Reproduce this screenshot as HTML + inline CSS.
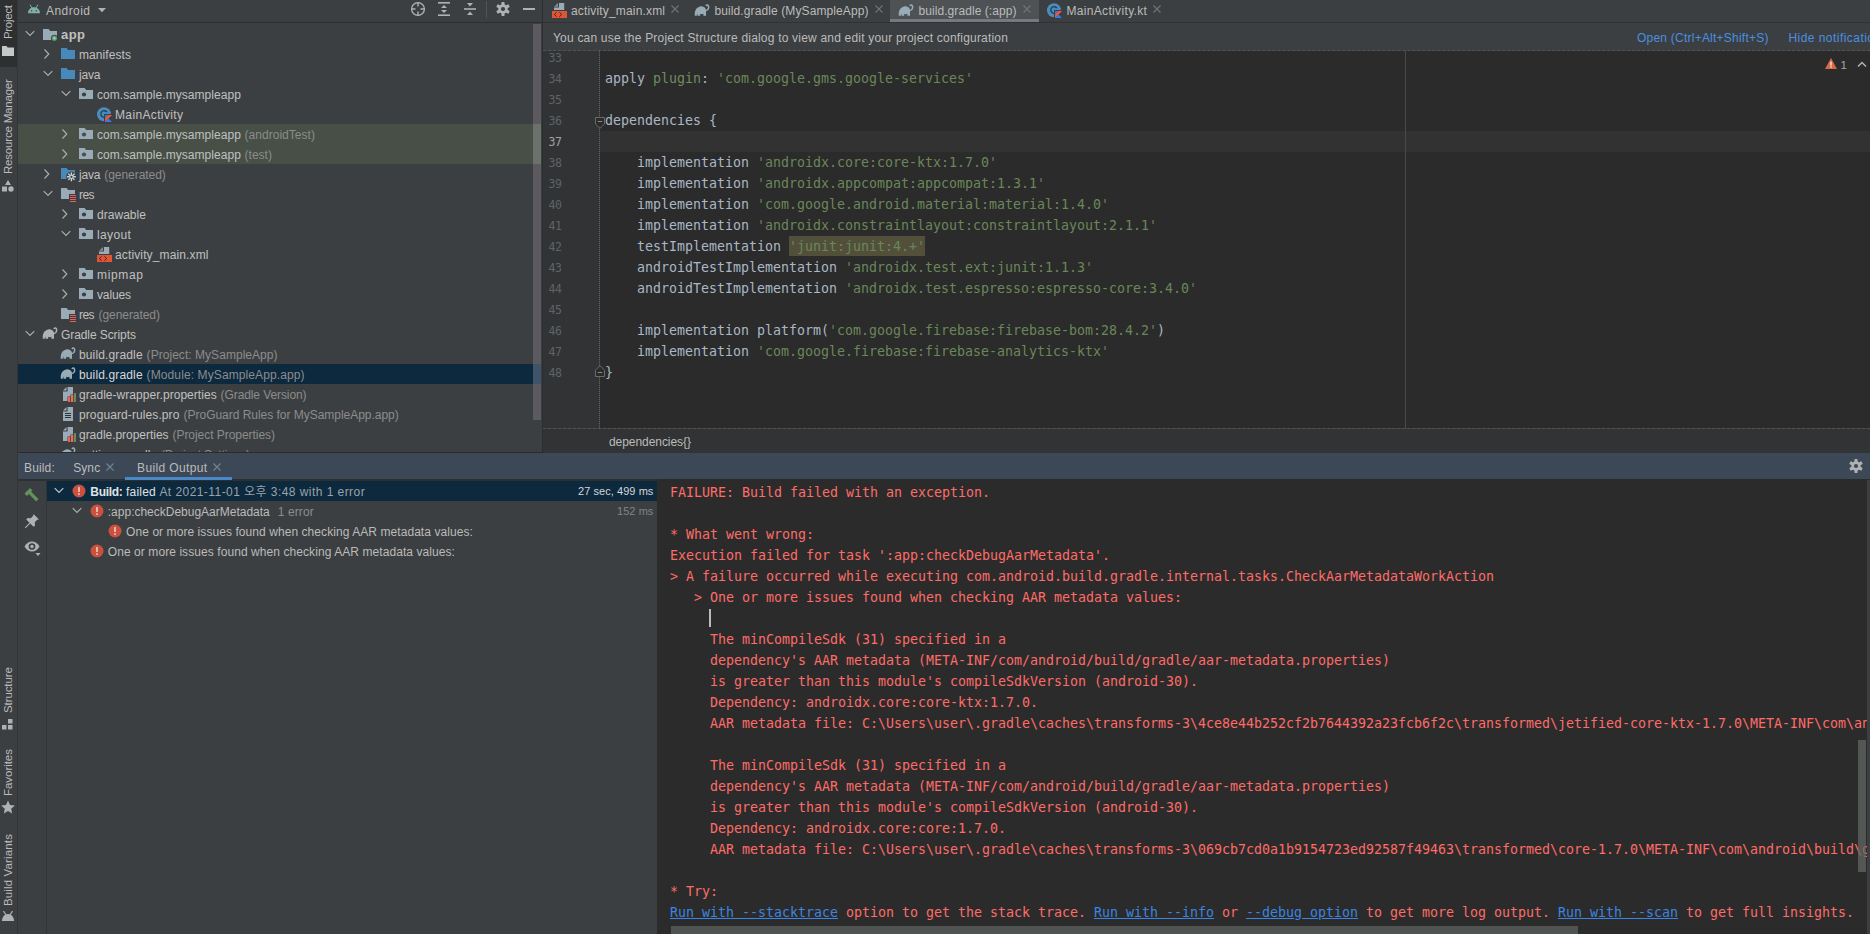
<!DOCTYPE html><html lang="ko"><head><meta charset="utf-8"><title>MySampleApp - build.gradle (:app)</title><style>

html,body{margin:0;padding:0;overflow:hidden}
body{width:1870px;height:934px;overflow:hidden;position:relative;background:#3c3f41;font-family:"Liberation Sans", "Noto Sans CJK KR", sans-serif;font-size:12px;color:#bbbbbb}
body>div,body>svg,body>span,body>pre,#con>pre{position:absolute;display:block}
span.t{white-space:pre;line-height:20px;height:20px}
span.m{font-family:"DejaVu Sans Mono", "Liberation Mono", monospace}
span.v{transform-origin:0 0;transform:rotate(-90deg)}
pre{margin:0;font-family:"DejaVu Sans Mono", "Liberation Mono", monospace;font-size:13.295px;line-height:21px;height:21px;white-space:pre;letter-spacing:.004px}
pre.code{color:#a9b7c6}
.cd{color:#a9b7c6}.ck{color:#6f8c5f}.cs{color:#6a8759}.cw{color:#6a8759;background:#52503a;display:inline-block;height:20px;vertical-align:top;margin-top:0}
#con{left:657px;top:480px;width:1210px;height:454px;overflow:hidden;position:absolute;z-index:2}
pre.con{left:13px;color:#ff6b68}
pre.con a{color:#3b84e0;text-decoration:underline}

</style></head><body>
<div style="left:0px;top:0px;width:17px;height:934px;background:#3c3f41;"></div>
<div style="left:0px;top:0px;width:17px;height:67px;background:#2d2f31;"></div>
<div style="left:17px;top:0px;width:1px;height:934px;background:#333638;"></div>
<svg style="left:2px;top:45px" width="12" height="11" viewBox="0 0 12 11"><path d="M0 1h4.500l1.200 1.600H12V11H0z" fill="#c4c8c9"/></svg>
<svg style="left:2px;top:180px" width="12" height="12" viewBox="0 0 12 12"><path d="M6 0l3 5H3z" fill="#afb1b3"/><rect x="0" y="6.500" width="5" height="5" fill="#afb1b3"/><circle cx="9" cy="9" r="2.700" fill="#afb1b3"/></svg>
<svg style="left:2px;top:719px" width="12" height="11" viewBox="0 0 12 11"><rect x="6" y="0" width="4.500" height="4.500" fill="#afb1b3"/><rect x="0" y="6" width="4.500" height="4.500" fill="#afb1b3"/><rect x="6" y="6" width="4.500" height="4.500" fill="#afb1b3"/></svg>
<svg style="left:1px;top:800px" width="14" height="14" viewBox="0 0 14 14"><path d="M7 .5l2 4.500 4.800.500-3.600 3.200 1 4.800L7 11l-4.200 2.500 1-4.800L.2 5.500 5 5z" fill="#afb1b3"/></svg>
<svg style="left:2px;top:911px" width="12" height="10" viewBox="0 0 12 10"><path d="M0 10c0-4 2.500-7 6-7s6 3 6 7z" fill="#afb1b3"/><path d="M1.500 0l2.500 4M10.500 0L8 4" stroke="#afb1b3" stroke-width="1.200"/></svg>
<div style="left:18px;top:0px;width:524px;height:22px;background:#3c3f41;"></div>
<div style="left:18px;top:22px;width:524px;height:1px;background:#2d2f30;"></div>
<svg style="left:28px;top:4px" width="12" height="10" viewBox="0 0 12 10"><path d="M0 9.200c0-3.600 2.600-6 6-6s6 2.400 6 6z" fill="#7fb0a6"/><path d="M2 .700l2.200 3.500M10 .700L7.800 4.200" stroke="#7fb0a6" stroke-width="1"/><circle cx="3.700" cy="6.700" r=".75" fill="#3c3f41"/><circle cx="8.300" cy="6.700" r=".75" fill="#3c3f41"/></svg>
<svg style="left:97px;top:7px" width="10" height="6" viewBox="0 0 10 6"><path d="M1 1h8L5 5.200z" fill="#afb1b3"/></svg>
<svg style="left:410px;top:1px" width="16" height="16" viewBox="0 0 16 16"><circle cx="8" cy="8" r="6.400" fill="none" stroke="#afb1b3" stroke-width="1.300"/><path d="M8 1v4.500M8 10.500V15M1 8h4.500M10.500 8H15" stroke="#afb1b3" stroke-width="1.400"/></svg>
<svg style="left:437px;top:1px" width="14" height="16" viewBox="0 0 14 16"><rect x="1" y="1" width="12" height="1.600" fill="#afb1b3"/><rect x="1" y="13.400" width="12" height="1.600" fill="#afb1b3"/><path d="M7 4l3 3H4zM7 12l3-3H4z" fill="#afb1b3"/></svg>
<svg style="left:463px;top:2px" width="14" height="14" viewBox="0 0 14 14"><rect x="1" y="6.200" width="12" height="1.600" fill="#afb1b3"/><path d="M7 4.500l3-3.500H4zM7 9.500l3 3.500H4z" fill="#afb1b3"/></svg>
<div style="left:486px;top:1px;width:1px;height:17px;background:#515456;"></div>
<svg style="left:496px;top:2px" width="14" height="14" viewBox="0 0 14 14"><rect x="5.400" y="0" width="3.200" height="14" rx=".8" fill="#afb1b3" transform="rotate(0 7 7)"/><rect x="5.400" y="0" width="3.200" height="14" rx=".8" fill="#afb1b3" transform="rotate(60 7 7)"/><rect x="5.400" y="0" width="3.200" height="14" rx=".8" fill="#afb1b3" transform="rotate(120 7 7)"/><circle cx="7" cy="7" r="4.700" fill="#afb1b3"/><circle cx="7" cy="7" r="2.100" fill="#3c3f41"/></svg>
<div style="left:523px;top:8px;width:12px;height:2px;background:#afb1b3;"></div>
<div style="left:18px;top:124px;width:515px;height:40px;background:#474f47;"></div>
<div style="left:18px;top:364px;width:523px;height:20px;background:#0d293e;"></div>
<div style="left:533px;top:24px;width:8px;height:396px;background:#5c5a60;"></div>
<div style="left:533px;top:124px;width:8px;height:40px;background:#6b726b;"></div>
<div style="left:533px;top:364px;width:8px;height:20px;background:#3f5468;"></div>
<svg style="left:23.5px;top:29.5px" width="12" height="8" viewBox="0 0 12 8"><path d="M1.700 1.200L6 5.400 10.300 1.200" fill="none" stroke="#a9b0b0" stroke-width="1.150"/></svg>
<svg style="left:42px;top:27px" width="16" height="16" viewBox="0 0 16 16"><path d="M1 2h5.6l1.5 2H15v9H1z" fill="#9aabb8"/><circle cx="12.400" cy="11.300" r="3.500" fill="#3c3f41"/><circle cx="12.400" cy="11.300" r="2.700" fill="#5a9a4c"/><path d="M12.400 9.500l1.800 1.800-1.800 1.800-1.800-1.800z" fill="#8cc4e6"/></svg>
<svg style="left:42.8px;top:47.5px" width="8" height="12" viewBox="0 0 8 12"><path d="M1.500 1.500L5.800 6 1.500 10.500" fill="none" stroke="#a9b0b0" stroke-width="1.150"/></svg>
<svg style="left:60px;top:46px" width="16" height="16" viewBox="0 0 16 16"><path d="M1 2h5.6l1.5 2H15v9H1z" fill="#4889bc"/></svg>
<svg style="left:41.5px;top:69.5px" width="12" height="8" viewBox="0 0 12 8"><path d="M1.700 1.200L6 5.400 10.300 1.200" fill="none" stroke="#a9b0b0" stroke-width="1.150"/></svg>
<svg style="left:60px;top:66px" width="16" height="16" viewBox="0 0 16 16"><path d="M1 2h5.6l1.5 2H15v9H1z" fill="#4889bc"/></svg>
<svg style="left:59.5px;top:89.5px" width="12" height="8" viewBox="0 0 12 8"><path d="M1.700 1.200L6 5.400 10.300 1.200" fill="none" stroke="#a9b0b0" stroke-width="1.150"/></svg>
<svg style="left:78px;top:86px" width="16" height="16" viewBox="0 0 16 16"><path d="M1 2h5.6l1.5 2H15v9H1z" fill="#9aabb8"/><circle cx="6" cy="8.500" r="2.100" fill="#3c3f41"/></svg>
<svg style="left:97px;top:107px" width="16" height="16" viewBox="0 0 16 16"><circle cx="7" cy="7.200" r="7" fill="#4a8dbd"/><path d="M9.900 8.800a3.300 3.300 0 1 1 0-3.600" fill="none" stroke="#27414f" stroke-width="1.300"/><rect x="7" y="7" width="9" height="9" fill="#3c3f41"/><path d="M8 8h3.500L8 11.500z" fill="#2a7ff0"/><path d="M11.500 8H15l-7 7v-3.500z" fill="#f9533f"/><path d="M8 15l3.500-3.500L15 15z" fill="#2a7ff0"/></svg>
<svg style="left:60.8px;top:127.5px" width="8" height="12" viewBox="0 0 8 12"><path d="M1.500 1.500L5.800 6 1.500 10.500" fill="none" stroke="#a9b0b0" stroke-width="1.150"/></svg>
<svg style="left:78px;top:126px" width="16" height="16" viewBox="0 0 16 16"><path d="M1 2h5.6l1.5 2H15v9H1z" fill="#9aabb8"/><circle cx="6" cy="8.500" r="2.100" fill="#474f47"/></svg>
<svg style="left:60.8px;top:147.5px" width="8" height="12" viewBox="0 0 8 12"><path d="M1.500 1.500L5.800 6 1.500 10.500" fill="none" stroke="#a9b0b0" stroke-width="1.150"/></svg>
<svg style="left:78px;top:146px" width="16" height="16" viewBox="0 0 16 16"><path d="M1 2h5.6l1.5 2H15v9H1z" fill="#9aabb8"/><circle cx="6" cy="8.500" r="2.100" fill="#474f47"/></svg>
<svg style="left:42.8px;top:167.5px" width="8" height="12" viewBox="0 0 8 12"><path d="M1.500 1.500L5.800 6 1.500 10.500" fill="none" stroke="#a9b0b0" stroke-width="1.150"/></svg>
<svg style="left:60px;top:166px" width="16" height="16" viewBox="0 0 16 16"><path d="M1 2h5.6l1.5 2H15v9H1z" fill="#4889bc"/><circle cx="11.400" cy="10.800" r="5.200" fill="#3c3f41"/><rect x="10.700" y="6.300" width="1.400" height="9" rx=".5" fill="#c9d2d6" transform="rotate(0 11.400 10.800)"/><rect x="10.700" y="6.300" width="1.400" height="9" rx=".5" fill="#c9d2d6" transform="rotate(45 11.400 10.800)"/><rect x="10.700" y="6.300" width="1.400" height="9" rx=".5" fill="#c9d2d6" transform="rotate(90 11.400 10.800)"/><rect x="10.700" y="6.300" width="1.400" height="9" rx=".5" fill="#c9d2d6" transform="rotate(135 11.400 10.800)"/><circle cx="11.400" cy="10.800" r="1.100" fill="#3c3f41"/></svg>
<svg style="left:41.5px;top:189.5px" width="12" height="8" viewBox="0 0 12 8"><path d="M1.700 1.200L6 5.400 10.300 1.200" fill="none" stroke="#a9b0b0" stroke-width="1.150"/></svg>
<svg style="left:60px;top:186px" width="16" height="16" viewBox="0 0 16 16"><path d="M1 2h5.6l1.5 2H15v9H1z" fill="#9aabb8"/><rect x="9" y="8" width="7" height="8" fill="#3c3f41"/><rect x="10" y="9" width="6" height="1" fill="#e0625a"/><rect x="10" y="11" width="6" height="1" fill="#e0625a"/><rect x="10" y="13" width="6" height="1" fill="#e0625a"/><rect x="10" y="15" width="6" height="1" fill="#e0625a"/></svg>
<svg style="left:60.8px;top:207.5px" width="8" height="12" viewBox="0 0 8 12"><path d="M1.500 1.500L5.800 6 1.500 10.500" fill="none" stroke="#a9b0b0" stroke-width="1.150"/></svg>
<svg style="left:78px;top:206px" width="16" height="16" viewBox="0 0 16 16"><path d="M1 2h5.6l1.5 2H15v9H1z" fill="#9aabb8"/><circle cx="6" cy="8.500" r="2.100" fill="#3c3f41"/></svg>
<svg style="left:59.5px;top:229.5px" width="12" height="8" viewBox="0 0 12 8"><path d="M1.700 1.200L6 5.400 10.300 1.200" fill="none" stroke="#a9b0b0" stroke-width="1.150"/></svg>
<svg style="left:78px;top:226px" width="16" height="16" viewBox="0 0 16 16"><path d="M1 2h5.6l1.5 2H15v9H1z" fill="#9aabb8"/><circle cx="6" cy="8.500" r="2.100" fill="#3c3f41"/></svg>
<svg style="left:97px;top:247px" width="16" height="16" viewBox="0 0 16 16"><path d="M7 0h5.200v7H2V4.500h5z" fill="#9aabb8"/><path d="M6 0v3.700H2z" fill="#9aabb8" opacity=".75"/><rect x="0" y="8" width="15" height="7" fill="#e05533"/><path d="M4.600 9.300L2.300 11.500l2.300 2.200M7.400 9.300l2.300 2.200-2.300 2.200" fill="none" stroke="#43221c" stroke-width="1"/></svg>
<svg style="left:60.8px;top:267.5px" width="8" height="12" viewBox="0 0 8 12"><path d="M1.500 1.500L5.800 6 1.500 10.500" fill="none" stroke="#a9b0b0" stroke-width="1.150"/></svg>
<svg style="left:78px;top:266px" width="16" height="16" viewBox="0 0 16 16"><path d="M1 2h5.6l1.5 2H15v9H1z" fill="#9aabb8"/><circle cx="6" cy="8.500" r="2.100" fill="#3c3f41"/></svg>
<svg style="left:60.8px;top:287.5px" width="8" height="12" viewBox="0 0 8 12"><path d="M1.500 1.500L5.800 6 1.500 10.500" fill="none" stroke="#a9b0b0" stroke-width="1.150"/></svg>
<svg style="left:78px;top:286px" width="16" height="16" viewBox="0 0 16 16"><path d="M1 2h5.6l1.5 2H15v9H1z" fill="#9aabb8"/><circle cx="6" cy="8.500" r="2.100" fill="#3c3f41"/></svg>
<svg style="left:60px;top:306px" width="16" height="16" viewBox="0 0 16 16"><path d="M1 2h5.6l1.5 2H15v9H1z" fill="#9aabb8"/><rect x="9" y="8" width="7" height="8" fill="#3c3f41"/><rect x="10" y="9" width="6" height="1" fill="#e0625a"/><rect x="10" y="11" width="6" height="1" fill="#e0625a"/><rect x="10" y="13" width="6" height="1" fill="#e0625a"/><rect x="10" y="15" width="6" height="1" fill="#e0625a"/></svg>
<svg style="left:23.5px;top:329.5px" width="12" height="8" viewBox="0 0 12 8"><path d="M1.700 1.200L6 5.400 10.300 1.200" fill="none" stroke="#a9b0b0" stroke-width="1.150"/></svg>
<svg style="left:42px;top:326px" width="16" height="16" viewBox="0 0 16 16"><path d="M.800 12.800C.400 8 2 4.200 6.200 3.400c2.800-.400 5.300 1 5.800 3.600v5.800H9.400v-2c-1 .500-2 .500-3 0l-.400 2H3.500v-2.300c-.500.500-.700 1.500-.700 2.300z" fill="#afb1b3"/><path d="M11.300 7.600c2.200.100 3.700-1.900 3.300-4.200-.300-1.500-1.800-1.800-2.400-.900" fill="none" stroke="#afb1b3" stroke-width="1.500" stroke-linecap="round"/></svg>
<svg style="left:60px;top:346px" width="16" height="16" viewBox="0 0 16 16"><path d="M.800 12.800C.400 8 2 4.200 6.200 3.400c2.800-.400 5.300 1 5.800 3.600v5.800H9.400v-2c-1 .500-2 .500-3 0l-.400 2H3.500v-2.300c-.500.500-.700 1.500-.700 2.300z" fill="#9aabb8"/><path d="M11.300 7.600c2.200.100 3.700-1.900 3.300-4.200-.300-1.500-1.800-1.800-2.400-.900" fill="none" stroke="#9aabb8" stroke-width="1.500" stroke-linecap="round"/></svg>
<svg style="left:60px;top:366px" width="16" height="16" viewBox="0 0 16 16"><path d="M.800 12.800C.400 8 2 4.200 6.200 3.400c2.800-.400 5.300 1 5.800 3.600v5.800H9.400v-2c-1 .500-2 .500-3 0l-.400 2H3.500v-2.300c-.500.500-.700 1.500-.700 2.300z" fill="#9aabb8"/><path d="M11.300 7.600c2.200.100 3.700-1.900 3.300-4.200-.300-1.500-1.800-1.800-2.400-.900" fill="none" stroke="#9aabb8" stroke-width="1.500" stroke-linecap="round"/></svg>
<svg style="left:61px;top:387px" width="16" height="16" viewBox="0 0 16 16"><path d="M6.600 0H12v14H2V4.600h4.600z" fill="#9aabb8"/><path d="M5.500 0v3.500H2z" fill="#9aabb8"/><path d="M6.500 9.500h3v-2h3v-2H16V16H6.500z" fill="#3c3f41"/><rect x="7" y="10" width="2.200" height="5" fill="#f4604b"/><rect x="10" y="8" width="2.200" height="7" fill="#f26a62"/><rect x="13" y="6" width="2" height="9" fill="#6a8f52"/></svg>
<svg style="left:61px;top:407px" width="16" height="16" viewBox="0 0 16 16"><path d="M6.600 0H12v14H2V4.600h4.600z" fill="#9aabb8"/><path d="M5.500 0v3.500H2z" fill="#9aabb8"/><rect x="4" y="6" width="6" height="1" fill="#2f3335"/><rect x="4" y="8" width="6" height="1" fill="#2f3335"/><rect x="4" y="10" width="6" height="1" fill="#2f3335"/></svg>
<svg style="left:61px;top:427px" width="16" height="16" viewBox="0 0 16 16"><path d="M6.600 0H12v14H2V4.600h4.600z" fill="#9aabb8"/><path d="M5.500 0v3.500H2z" fill="#9aabb8"/><path d="M6.500 9.500h3v-2h3v-2H16V16H6.500z" fill="#3c3f41"/><rect x="7" y="10" width="2.200" height="5" fill="#f4604b"/><rect x="10" y="8" width="2.200" height="7" fill="#f26a62"/><rect x="13" y="6" width="2" height="9" fill="#6a8f52"/></svg>
<svg style="left:60px;top:446px" width="16" height="16" viewBox="0 0 16 16"><path d="M.800 12.800C.400 8 2 4.200 6.200 3.400c2.800-.400 5.300 1 5.800 3.600v5.800H9.400v-2c-1 .500-2 .500-3 0l-.400 2H3.500v-2.300c-.500.500-.700 1.500-.700 2.300z" fill="#9aabb8"/><path d="M11.300 7.600c2.200.100 3.700-1.900 3.300-4.200-.300-1.500-1.800-1.800-2.400-.900" fill="none" stroke="#9aabb8" stroke-width="1.500" stroke-linecap="round"/></svg>
<div style="left:542px;top:0px;width:1px;height:453px;background:#2b2d2e;"></div>
<div style="left:543px;top:0px;width:1327px;height:22px;background:#3c3f41;"></div>
<div style="left:543px;top:22px;width:1327px;height:1px;background:#323232;"></div>
<div style="left:890px;top:0px;width:149px;height:22px;background:#4e5254;"></div>
<div style="left:890px;top:19px;width:149px;height:3px;background:#747a80;"></div>
<svg style="left:552px;top:3px" width="16" height="16" viewBox="0 0 16 16"><path d="M7 0h5.200v7H2V4.500h5z" fill="#9aabb8"/><path d="M6 0v3.700H2z" fill="#9aabb8" opacity=".75"/><rect x="0" y="8" width="15" height="7" fill="#e05533"/><path d="M4.600 9.300L2.300 11.500l2.300 2.200M7.400 9.300l2.300 2.200-2.300 2.200" fill="none" stroke="#43221c" stroke-width="1"/></svg>
<svg style="left:670px;top:4px" width="10" height="10" viewBox="0 0 10 10"><path d="M1.500 1.500l7 7M8.500 1.500l-7 7" stroke="#6f7476" stroke-width="1.100" fill="none"/></svg>
<svg style="left:694px;top:3px" width="16" height="16" viewBox="0 0 16 16"><path d="M.800 12.800C.400 8 2 4.200 6.200 3.400c2.800-.400 5.300 1 5.800 3.600v5.800H9.400v-2c-1 .500-2 .500-3 0l-.400 2H3.500v-2.300c-.500.500-.700 1.500-.700 2.300z" fill="#9aabb8"/><path d="M11.300 7.600c2.200.100 3.700-1.900 3.300-4.200-.300-1.500-1.800-1.800-2.400-.900" fill="none" stroke="#9aabb8" stroke-width="1.500" stroke-linecap="round"/></svg>
<svg style="left:874px;top:4px" width="10" height="10" viewBox="0 0 10 10"><path d="M1.500 1.500l7 7M8.500 1.500l-7 7" stroke="#6f7476" stroke-width="1.100" fill="none"/></svg>
<svg style="left:898px;top:3px" width="16" height="16" viewBox="0 0 16 16"><path d="M.800 12.800C.400 8 2 4.200 6.200 3.400c2.800-.400 5.300 1 5.800 3.600v5.800H9.400v-2c-1 .500-2 .500-3 0l-.400 2H3.500v-2.300c-.500.500-.700 1.500-.700 2.300z" fill="#9aabb8"/><path d="M11.300 7.600c2.200.100 3.700-1.900 3.300-4.200-.300-1.500-1.800-1.800-2.400-.900" fill="none" stroke="#9aabb8" stroke-width="1.500" stroke-linecap="round"/></svg>
<svg style="left:1022px;top:4px" width="10" height="10" viewBox="0 0 10 10"><path d="M1.500 1.500l7 7M8.500 1.500l-7 7" stroke="#6f7476" stroke-width="1.100" fill="none"/></svg>
<svg style="left:1047px;top:3px" width="16" height="16" viewBox="0 0 16 16"><circle cx="7" cy="7.200" r="7" fill="#4a8dbd"/><path d="M9.900 8.800a3.300 3.300 0 1 1 0-3.600" fill="none" stroke="#27414f" stroke-width="1.300"/><rect x="7" y="7" width="9" height="9" fill="#3c3f41"/><path d="M8 8h3.500L8 11.500z" fill="#2a7ff0"/><path d="M11.500 8H15l-7 7v-3.500z" fill="#f9533f"/><path d="M8 15l3.500-3.500L15 15z" fill="#2a7ff0"/></svg>
<svg style="left:1152px;top:4px" width="10" height="10" viewBox="0 0 10 10"><path d="M1.500 1.500l7 7M8.500 1.500l-7 7" stroke="#6f7476" stroke-width="1.100" fill="none"/></svg>
<div style="left:543px;top:23px;width:1327px;height:27px;background:#3c3f41;"></div>
<div style="left:543px;top:50px;width:1327px;height:0px;background:none;border-top:1px dashed #505355"></div>
<div style="left:543px;top:51px;width:56px;height:377px;background:#313335;"></div>
<div style="left:599px;top:51px;width:0px;height:377px;background:none;border-left:1px dotted #606060"></div>
<div style="left:600px;top:51px;width:1270px;height:377px;background:#2b2b2b;"></div>
<div style="left:600px;top:131px;width:1270px;height:21px;background:#323232;"></div>
<div style="left:1405px;top:51px;width:1px;height:377px;background:#4a4a4a;"></div>
<div style="left:543px;top:428px;width:1327px;height:0px;background:none;border-top:1px dashed #505355"></div>
<div style="left:543px;top:429px;width:1327px;height:23px;background:#313335;"></div>
<svg style="left:595px;top:117px" width="10" height="12" viewBox="0 0 10 12"><path d="M.500.500h9v6.500L5 11.300.500 7z" fill="#2b2b2b" stroke="#6b6b6b" stroke-width="1"/><path d="M2.800 4.500h4.400" stroke="#8a8a8a" stroke-width="1"/></svg>
<svg style="left:595px;top:365px" width="10" height="12" viewBox="0 0 10 12"><path d="M.500 11.500h9V5L5 .7.500 5z" fill="#2b2b2b" stroke="#6b6b6b" stroke-width="1"/><path d="M2.800 7.500h4.400" stroke="#8a8a8a" stroke-width="1"/></svg>
<svg style="left:1825px;top:58px" width="12" height="11" viewBox="0 0 12 11"><path d="M6 0l6 11H0z" fill="#d9674a"/><rect x="5.300" y="3.600" width="1.400" height="4" fill="#f7e3dd"/><rect x="5.300" y="8.300" width="1.400" height="1.400" fill="#f7e3dd"/></svg>
<svg style="left:1857px;top:61px" width="10" height="7" viewBox="0 0 10 7"><path d="M1 5.600L5 1.500l4 4.100" fill="none" stroke="#afb1b3" stroke-width="1.500"/></svg>
<div style="left:18px;top:452px;width:1852px;height:1px;background:#2b2b2b;z-index:1"></div>
<div style="left:543px;top:450px;width:1327px;height:3px;background:#323537;z-index:1"></div>
<div style="left:18px;top:453px;width:1852px;height:26px;background:#3d4856;z-index:1"></div>
<div style="left:18px;top:479px;width:639px;height:2px;background:#2d2f30;z-index:1"></div>
<svg style="left:105px;top:461.5px;z-index:2" width="10" height="10" viewBox="0 0 10 10"><path d="M1.500 1.500l7 7M8.500 1.500l-7 7" stroke="#78838f" stroke-width="1.100" fill="none"/></svg>
<svg style="left:212px;top:461.5px;z-index:2" width="10" height="10" viewBox="0 0 10 10"><path d="M1.500 1.500l7 7M8.500 1.500l-7 7" stroke="#78838f" stroke-width="1.100" fill="none"/></svg>
<div style="left:125px;top:477px;width:107px;height:3px;background:#4a88c7;z-index:2"></div>
<svg style="left:1849px;top:459px;z-index:2" width="14" height="14" viewBox="0 0 14 14"><rect x="5.400" y="0" width="3.200" height="14" rx=".8" fill="#afb1b3" transform="rotate(0 7 7)"/><rect x="5.400" y="0" width="3.200" height="14" rx=".8" fill="#afb1b3" transform="rotate(60 7 7)"/><rect x="5.400" y="0" width="3.200" height="14" rx=".8" fill="#afb1b3" transform="rotate(120 7 7)"/><circle cx="7" cy="7" r="4.700" fill="#afb1b3"/><circle cx="7" cy="7" r="2.100" fill="#3d4856"/></svg>
<div style="left:18px;top:481px;width:28px;height:453px;background:#3c3f41;"></div>
<div style="left:46px;top:481px;width:1px;height:453px;background:#323537;"></div>
<svg style="left:23px;top:487px" width="17" height="16" viewBox="0 0 17 16"><path d="M1.500 6.500L7 1l2.500 2.500-1.300 1.300 7.300 7.300-2.300 2.300-7.300-7.300L4 9z" fill="#62925a"/></svg>
<svg style="left:24px;top:513px" width="16" height="16" viewBox="0 0 16 16"><path d="M9.500 1l5.500 5.500-1.800.3-2.400 2.400.2 3.200-1.400 1.400L6.300 10.500 1.800 15H1v-.8l4.500-4.500L2.200 6.400 3.600 5l3.200.2 2.400-2.400z" fill="#afb1b3"/></svg>
<svg style="left:24px;top:540px" width="18" height="17" viewBox="0 0 18 17"><path d="M.500 6.500C2.500 3 5 1.500 8 1.500s5.500 1.500 7.500 5c-2 3.500-4.500 5-7.500 5s-5.500-1.500-7.500-5z" fill="#afb1b3"/><circle cx="8" cy="6.500" r="3.300" fill="#3c3f41"/><circle cx="8" cy="6.500" r="1.700" fill="#afb1b3"/><path d="M11.500 13h5L14 16z" fill="#afb1b3"/></svg>
<div style="left:47px;top:481px;width:610px;height:453px;background:#3c3f41;"></div>
<div style="left:47px;top:481px;width:610px;height:20px;background:#0d293e;"></div>
<svg style="left:52.5px;top:486.5px" width="12" height="8" viewBox="0 0 12 8"><path d="M1.700 1.200L6 5.400 10.300 1.200" fill="none" stroke="#c4cbd0" stroke-width="1.150"/></svg>
<svg style="left:72px;top:484px" width="14" height="14" viewBox="0 0 14 14"><circle cx="7" cy="7" r="6.500" fill="#c9513f"/><rect x="6.250" y="3" width="1.500" height="5" rx=".3" fill="#f2d5cf"/><rect x="6.250" y="9.200" width="1.500" height="1.700" rx=".3" fill="#f2d5cf"/></svg>
<svg style="left:70.5px;top:506.5px" width="12" height="8" viewBox="0 0 12 8"><path d="M1.700 1.200L6 5.400 10.300 1.200" fill="none" stroke="#a9b0b0" stroke-width="1.150"/></svg>
<svg style="left:90px;top:504px" width="14" height="14" viewBox="0 0 14 14"><circle cx="7" cy="7" r="6.500" fill="#c9513f"/><rect x="6.250" y="3" width="1.500" height="5" rx=".3" fill="#f2d5cf"/><rect x="6.250" y="9.200" width="1.500" height="1.700" rx=".3" fill="#f2d5cf"/></svg>
<svg style="left:108px;top:524px" width="14" height="14" viewBox="0 0 14 14"><circle cx="7" cy="7" r="6.500" fill="#c9513f"/><rect x="6.250" y="3" width="1.500" height="5" rx=".3" fill="#f2d5cf"/><rect x="6.250" y="9.200" width="1.500" height="1.700" rx=".3" fill="#f2d5cf"/></svg>
<svg style="left:90px;top:544px" width="14" height="14" viewBox="0 0 14 14"><circle cx="7" cy="7" r="6.500" fill="#c9513f"/><rect x="6.250" y="3" width="1.500" height="5" rx=".3" fill="#f2d5cf"/><rect x="6.250" y="9.200" width="1.500" height="1.700" rx=".3" fill="#f2d5cf"/></svg>
<div style="left:657px;top:479px;width:1213px;height:455px;background:#2b2b2b;z-index:1"></div>
<div style="left:1867px;top:480px;width:3px;height:454px;background:#3c3f41;z-index:1"></div>
<pre class="code" style="left:605px;top:68px"><span class="cd">apply </span><span class="ck">plugin</span><span class="cd">: </span><span class="cs">&#x27;com.google.gms.google-services&#x27;</span></pre>
<pre class="code" style="left:605px;top:110px"><span class="cd">dependencies {</span></pre>
<pre class="code" style="left:605px;top:152px"><span class="cd">    implementation </span><span class="cs">&#x27;androidx.core:core-ktx:1.7.0&#x27;</span></pre>
<pre class="code" style="left:605px;top:173px"><span class="cd">    implementation </span><span class="cs">&#x27;androidx.appcompat:appcompat:1.3.1&#x27;</span></pre>
<pre class="code" style="left:605px;top:194px"><span class="cd">    implementation </span><span class="cs">&#x27;com.google.android.material:material:1.4.0&#x27;</span></pre>
<pre class="code" style="left:605px;top:215px"><span class="cd">    implementation </span><span class="cs">&#x27;androidx.constraintlayout:constraintlayout:2.1.1&#x27;</span></pre>
<pre class="code" style="left:605px;top:236px"><span class="cd">    testImplementation </span><span class="cw">&#x27;junit:junit:4.+&#x27;</span></pre>
<pre class="code" style="left:605px;top:257px"><span class="cd">    androidTestImplementation </span><span class="cs">&#x27;androidx.test.ext:junit:1.1.3&#x27;</span></pre>
<pre class="code" style="left:605px;top:278px"><span class="cd">    androidTestImplementation </span><span class="cs">&#x27;androidx.test.espresso:espresso-core:3.4.0&#x27;</span></pre>
<pre class="code" style="left:605px;top:320px"><span class="cd">    implementation platform(</span><span class="cs">&#x27;com.google.firebase:firebase-bom:28.4.2&#x27;</span><span class="cd">)</span></pre>
<pre class="code" style="left:605px;top:341px"><span class="cd">    implementation </span><span class="cs">&#x27;com.google.firebase:firebase-analytics-ktx&#x27;</span></pre>
<pre class="code" style="left:605px;top:362px"><span class="cd">}</span></pre>
<div id="con"><pre class="con" style="top:2px">FAILURE: Build failed with an exception.</pre><pre class="con" style="top:44px">* What went wrong:</pre><pre class="con" style="top:65px">Execution failed for task &#x27;:app:checkDebugAarMetadata&#x27;.</pre><pre class="con" style="top:86px">&gt; A failure occurred while executing com.android.build.gradle.internal.tasks.CheckAarMetadataWorkAction</pre><pre class="con" style="top:107px">   &gt; One or more issues found when checking AAR metadata values:</pre><pre class="con" style="top:149px">     The minCompileSdk (31) specified in a</pre><pre class="con" style="top:170px">     dependency&#x27;s AAR metadata (META-INF/com/android/build/gradle/aar-metadata.properties)</pre><pre class="con" style="top:191px">     is greater than this module&#x27;s compileSdkVersion (android-30).</pre><pre class="con" style="top:212px">     Dependency: androidx.core:core-ktx:1.7.0.</pre><pre class="con" style="top:233px">     AAR metadata file: C:\Users\user\.gradle\caches\transforms-3\4ce8e44b252cf2b7644392a23fcb6f2c\transformed\jetified-core-ktx-1.7.0\META-INF\com\android\build\gradle\aar-metadata.properties.</pre><pre class="con" style="top:275px">     The minCompileSdk (31) specified in a</pre><pre class="con" style="top:296px">     dependency&#x27;s AAR metadata (META-INF/com/android/build/gradle/aar-metadata.properties)</pre><pre class="con" style="top:317px">     is greater than this module&#x27;s compileSdkVersion (android-30).</pre><pre class="con" style="top:338px">     Dependency: androidx.core:core:1.7.0.</pre><pre class="con" style="top:359px">     AAR metadata file: C:\Users\user\.gradle\caches\transforms-3\069cb7cd0a1b9154723ed92587f49463\transformed\core-1.7.0\META-INF\com\android\build\gradle\aar-metadata.properties.</pre><pre class="con" style="top:401px">* Try:</pre><pre class="con" style="top:422px"><a>Run with --stacktrace</a> option to get the stack trace. <a>Run with --info</a> or <a>--debug option</a> to get more log output. <a>Run with --scan</a> to get full insights.</pre></div>
<div style="left:1858px;top:740px;width:8px;height:132px;background:rgba(98,104,100,.72);z-index:3"></div>
<div style="left:671px;top:926px;width:907px;height:8px;background:#4f5352;z-index:3"></div>
<div style="left:709px;top:609px;width:2px;height:18px;background:#bbbbbb;z-index:3"></div>
<span class="t v" style="font-size:11.5px;letter-spacing:-0.313px;left:-1.700px;top:39px;">Project</span>
<span class="t v" style="font-size:11.5px;letter-spacing:-0.193px;left:-1.700px;top:174px;">Resource Manager</span>
<span class="t v" style="font-size:11.5px;letter-spacing:-0.094px;left:-1.700px;top:713px;">Structure</span>
<span class="t v" style="font-size:11.5px;letter-spacing:-0.047px;left:-1.700px;top:796px;">Favorites</span>
<span class="t v" style="font-size:11.5px;letter-spacing:0.139px;left:-1.700px;top:906px;">Build Variants</span>
<span class="t" style="letter-spacing:0.431px;left:46.0px;top:0.84px;">Android</span>
<span class="t" style="font-size:13px;color:#c0c0c0;font-weight:700;letter-spacing:0.457px;left:61.0px;top:24.50px;">app</span>
<span class="t" style="color:#c0c0c0;letter-spacing:0.075px;left:79.0px;top:44.84px;">manifests</span>
<span class="t" style="color:#c0c0c0;letter-spacing:-0.185px;left:79.0px;top:64.84px;">java</span>
<span class="t" style="color:#c0c0c0;letter-spacing:0.058px;left:97.0px;top:84.84px;">com.sample.mysampleapp</span>
<span class="t" style="color:#c0c0c0;letter-spacing:0.359px;left:115.0px;top:104.84px;">MainActivity</span>
<span class="t" style="color:#c0c0c0;letter-spacing:0.058px;left:97.0px;top:124.84px;">com.sample.mysampleapp</span>
<span class="t" style="color:#8c8c8c;letter-spacing:0.036px;left:244.5px;top:124.84px;">(androidTest)</span>
<span class="t" style="color:#c0c0c0;letter-spacing:0.058px;left:97.0px;top:144.84px;">com.sample.mysampleapp</span>
<span class="t" style="color:#8c8c8c;letter-spacing:0.023px;left:244.5px;top:144.84px;">(test)</span>
<span class="t" style="color:#c0c0c0;letter-spacing:-0.185px;left:79.0px;top:164.84px;">java</span>
<span class="t" style="color:#8c8c8c;letter-spacing:-0.059px;left:104.3px;top:164.84px;">(generated)</span>
<span class="t" style="color:#c0c0c0;letter-spacing:-0.556px;left:79.0px;top:184.84px;">res</span>
<span class="t" style="color:#c0c0c0;letter-spacing:0.037px;left:97.0px;top:204.84px;">drawable</span>
<span class="t" style="color:#c0c0c0;letter-spacing:0.386px;left:97.0px;top:224.84px;">layout</span>
<span class="t" style="color:#c0c0c0;letter-spacing:0.131px;left:115.0px;top:244.84px;">activity_main.xml</span>
<span class="t" style="color:#c0c0c0;letter-spacing:0.655px;left:97.0px;top:264.84px;">mipmap</span>
<span class="t" style="color:#c0c0c0;letter-spacing:-0.145px;left:97.0px;top:284.84px;">values</span>
<span class="t" style="color:#c0c0c0;letter-spacing:-0.556px;left:79.0px;top:304.84px;">res</span>
<span class="t" style="color:#8c8c8c;letter-spacing:-0.059px;left:98.5px;top:304.84px;">(generated)</span>
<span class="t" style="color:#c0c0c0;letter-spacing:-0.082px;left:61.0px;top:324.84px;">Gradle Scripts</span>
<span class="t" style="color:#c0c0c0;letter-spacing:0.138px;left:79.0px;top:344.84px;">build.gradle</span>
<span class="t" style="color:#8c8c8c;letter-spacing:0.043px;left:146.6px;top:344.84px;">(Project: MySampleApp)</span>
<span class="t" style="color:#d8d8d8;letter-spacing:0.138px;left:79.0px;top:364.84px;">build.gradle</span>
<span class="t" style="color:#8c8c8c;letter-spacing:0.106px;left:146.6px;top:364.84px;">(Module: MySampleApp.app)</span>
<span class="t" style="color:#c0c0c0;letter-spacing:0.038px;left:79.0px;top:384.84px;">gradle-wrapper.properties</span>
<span class="t" style="color:#8c8c8c;letter-spacing:-0.094px;left:220.6px;top:384.84px;">(Gradle Version)</span>
<span class="t" style="color:#c0c0c0;letter-spacing:0.097px;left:79.0px;top:404.84px;">proguard-rules.pro</span>
<span class="t" style="color:#8c8c8c;letter-spacing:-0.027px;left:183.6px;top:404.84px;">(ProGuard Rules for MySampleApp.app)</span>
<span class="t" style="color:#c0c0c0;letter-spacing:-0.031px;left:79.0px;top:424.84px;">gradle.properties</span>
<span class="t" style="color:#8c8c8c;letter-spacing:-0.048px;left:172.5px;top:424.84px;">(Project Properties)</span>
<span class="t" style="color:#c0c0c0;letter-spacing:-0.006px;left:79.0px;top:444.84px;">settings.gradle</span>
<span class="t" style="color:#8c8c8c;letter-spacing:-0.182px;left:161.0px;top:444.84px;">(Project Settings)</span>
<span class="t" style="letter-spacing:0.163px;left:571.0px;top:0.84px;">activity_main.xml</span>
<span class="t" style="letter-spacing:0.110px;left:714.4px;top:0.84px;">build.gradle (MySampleApp)</span>
<span class="t" style="letter-spacing:0.079px;left:918.4px;top:0.84px;">build.gradle (:app)</span>
<span class="t" style="letter-spacing:0.340px;left:1066.4px;top:0.84px;">MainActivity.kt</span>
<span class="t" style="letter-spacing:0.198px;left:553.0px;top:27.84px;">You can use the Project Structure dialog to view and edit your project configuration</span>
<span class="t" style="color:#4a8fe0;letter-spacing:0.230px;left:1637.0px;top:27.84px;">Open (Ctrl+Alt+Shift+S)</span>
<span class="t" style="color:#4a8fe0;letter-spacing:0.460px;width:81.600px;overflow:hidden;left:1788.4px;top:27.84px;">Hide notification</span>
<span class="t" style="letter-spacing:-0.061px;left:609.0px;top:431.84px;">dependencies{}</span>
<span class="t m" style="font-size:11.5px;color:#606366;letter-spacing:-.4px;left:548.5px;top:48.02px;">33</span>
<span class="t m" style="font-size:11.5px;color:#606366;letter-spacing:-.4px;left:548.5px;top:69.02px;">34</span>
<span class="t m" style="font-size:11.5px;color:#606366;letter-spacing:-.4px;left:548.5px;top:90.02px;">35</span>
<span class="t m" style="font-size:11.5px;color:#606366;letter-spacing:-.4px;left:548.5px;top:111.02px;">36</span>
<span class="t m" style="font-size:11.5px;color:#a4a3a3;letter-spacing:-.4px;left:548.5px;top:132.02px;">37</span>
<span class="t m" style="font-size:11.5px;color:#606366;letter-spacing:-.4px;left:548.5px;top:153.02px;">38</span>
<span class="t m" style="font-size:11.5px;color:#606366;letter-spacing:-.4px;left:548.5px;top:174.02px;">39</span>
<span class="t m" style="font-size:11.5px;color:#606366;letter-spacing:-.4px;left:548.5px;top:195.02px;">40</span>
<span class="t m" style="font-size:11.5px;color:#606366;letter-spacing:-.4px;left:548.5px;top:216.02px;">41</span>
<span class="t m" style="font-size:11.5px;color:#606366;letter-spacing:-.4px;left:548.5px;top:237.02px;">42</span>
<span class="t m" style="font-size:11.5px;color:#606366;letter-spacing:-.4px;left:548.5px;top:258.02px;">43</span>
<span class="t m" style="font-size:11.5px;color:#606366;letter-spacing:-.4px;left:548.5px;top:279.02px;">44</span>
<span class="t m" style="font-size:11.5px;color:#606366;letter-spacing:-.4px;left:548.5px;top:300.02px;">45</span>
<span class="t m" style="font-size:11.5px;color:#606366;letter-spacing:-.4px;left:548.5px;top:321.02px;">46</span>
<span class="t m" style="font-size:11.5px;color:#606366;letter-spacing:-.4px;left:548.5px;top:342.02px;">47</span>
<span class="t m" style="font-size:11.5px;color:#606366;letter-spacing:-.4px;left:548.5px;top:363.02px;">48</span>
<span class="t" style="font-size:11.5px;color:#a7a7a7;left:1840.5px;top:54.52px;">1</span>
<span class="t" style="letter-spacing:0.146px;z-index:2;left:24.0px;top:458.34px;">Build:</span>
<span class="t" style="letter-spacing:0.091px;z-index:2;left:73.2px;top:458.34px;">Sync</span>
<span class="t" style="letter-spacing:0.374px;z-index:2;left:137.0px;top:458.34px;">Build Output</span>
<span class="t" style="color:#dfe3e6;font-weight:700;letter-spacing:-0.308px;left:90.3px;top:481.84px;">Build:</span>
<span class="t" style="color:#dfe3e6;letter-spacing:0.195px;left:126.1px;top:481.84px;">failed</span>
<span class="t" style="color:#9aa3ab;letter-spacing:0.443px;left:159.4px;top:481.84px;">At 2021-11-01 오후 3:48 with 1 error</span>
<span class="t" style="font-size:11px;color:#d3d7da;letter-spacing:0.060px;left:578.0px;top:481.19px;">27 sec, 499 ms</span>
<span class="t" style="letter-spacing:-0.006px;left:107.8px;top:501.84px;">:app:checkDebugAarMetadata</span>
<span class="t" style="color:#8c8c8c;letter-spacing:0.103px;left:277.7px;top:501.84px;">1 error</span>
<span class="t" style="font-size:11px;color:#808584;letter-spacing:0.060px;left:617.0px;top:501.19px;">152 ms</span>
<span class="t" style="letter-spacing:0.067px;left:126.1px;top:521.84px;">One or more issues found when checking AAR metadata values:</span>
<span class="t" style="letter-spacing:0.074px;left:107.8px;top:541.84px;">One or more issues found when checking AAR metadata values:</span>
</body></html>
